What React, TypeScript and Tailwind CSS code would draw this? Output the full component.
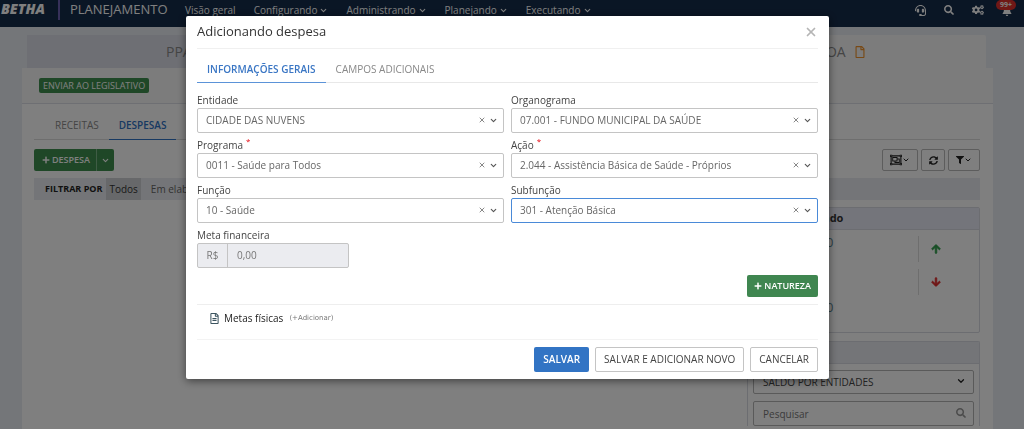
import React, { useState } from 'react';
import { ChevronDown, X } from 'lucide-react';
import {
  FaArrowDown,
  FaArrowUp,
  FaBell,
  FaCogs,
  FaFilter,
  FaHeadset,
  FaPlus,
  FaRegFile,
  FaRegFileAlt,
  FaRegObjectGroup,
  FaSearch,
  FaSyncAlt,
} from 'react-icons/fa';

const menus = ['Configurando', 'Administrando', 'Planejando', 'Executando'];

interface SelectFieldProps {
  id: string;
  label: string;
  value: string;
  required?: boolean;
  active?: boolean;
}

const SelectField: React.FC<SelectFieldProps> = ({ id, label, value, required, active }) => {
  const [selected, setSelected] = useState(value);

  return (
    <div>
      <label htmlFor={id} className="relative block h-5 w-fit pt-1.5 text-[10px] leading-3 text-[#444]">
        {label}
        {required && <span className="absolute top-0.5 left-full pl-[3px] text-[8px] leading-3 text-red-600">*</span>}
      </label>
      <div className="relative">
        <select
          id={id}
          value={selected}
          onChange={(e) => setSelected(e.target.value)}
          className={`block h-[25px] w-full appearance-none rounded-xs border bg-white pr-10 pl-2 text-[10px] text-[#666] outline-none ${
            active ? 'border-[#4a8ad8]' : 'border-[#c4c4c4]'
          }`}
        >
          <option value="" />
          <option value={value}>{value}</option>
        </select>
        <button
          type="button"
          aria-label={`Limpar ${label}`}
          onClick={() => setSelected('')}
          className="absolute top-2 right-[18px] text-[#888]"
        >
          <X className="size-2" strokeWidth={3} />
        </button>
        <ChevronDown className="pointer-events-none absolute top-2 right-1.5 size-[9px] text-[#555]" strokeWidth={3} />
      </div>
    </div>
  );
};

const TopBar: React.FC = () => (
  <header className="flex h-[27px] items-start bg-[#152c4a] text-white">
    <span className="w-[58px] pl-px text-[14px] leading-[18px] font-extrabold italic">BETHA</span>
    <span className="h-5 w-0.5 bg-[#6f62b5]" />
    <span className="w-[125px] pl-2.5 text-[13px] leading-[18px]">PLANEJAMENTO</span>
    <nav className="flex gap-[18px] text-[10px] leading-5">
      <a href="#">Visão geral</a>
      {menus.map((menu) => (
        <a key={menu} href="#" className="flex items-center gap-0.5">
          {menu}
          <ChevronDown className="size-[9px]" strokeWidth={3} />
        </a>
      ))}
    </nav>
    <div className="ml-auto flex h-5 items-center gap-[18px] pr-3">
      <button type="button" aria-label="Suporte"><FaHeadset className="size-[11px]" /></button>
      <button type="button" aria-label="Pesquisar"><FaSearch className="size-2.5" /></button>
      <button type="button" aria-label="Configurações"><FaCogs className="size-3" /></button>
      <button type="button" aria-label="Notificações" className="relative">
        <FaBell className="mt-0.5 size-2.5" />
        <span className="absolute -top-1 -left-1.5 rounded-full bg-[#e0302c] px-1 text-[7px] leading-[10px] font-bold">
          99+
        </span>
      </button>
    </div>
  </header>
);

const Page: React.FC = () => (
  <div className="h-full">
    <TopBar />
    <main className="mr-[31px] ml-[22px]">
      <div className="mr-[7px] ml-[5px] grid grid-cols-3 pt-2 text-[14px] text-[#8a8a8a]">
        <div className="flex h-[33px] items-center justify-center gap-2 bg-[#dddfe9] pl-1">
          PPA <FaRegFile className="size-3 text-[#f0932b]" />
        </div>
        <div className="flex h-[33px] items-center justify-center gap-2 bg-[#dddfe9]">
          LDO <FaRegFile className="size-3 text-[#f0932b]" />
        </div>
        <div className="flex h-[33px] items-center justify-center gap-2 rounded-t-xs bg-[#f8f8f8] pl-8">
          LOA <FaRegFile className="size-3 text-[#f0932b]" />
        </div>
      </div>
      <section className="bg-white">
        <div className="flex h-9 items-center border-b border-[#dcdfe6] bg-[#f8f8f8] px-[17px]">
          <button type="button" className="rounded-xs bg-[#3f8f4f] px-1 text-[9px] leading-[15px] font-medium text-white">
            ENVIAR AO LEGISLATIVO
          </button>
        </div>
        <div className="pr-[13px] pb-4 pl-3">
          <div className="flex h-9 items-end border-b border-[#ddd] pl-[11px] text-[10px] leading-[28px]">
            <button type="button" className="px-2.5 text-[#8a8a8a]">RECEITAS</button>
            <button type="button" className="-mb-px border-b border-[#2f72c4] px-2.5 font-semibold text-[#2f72c4]">
              DESPESAS
            </button>
          </div>
          <div className="mt-[9px] flex h-[22px] justify-between">
            <div className="flex text-[9px] font-semibold text-white">
              <button type="button" className="flex items-center gap-0.5 rounded-l-xs bg-[#3f8f4f] pr-1.5 pl-2">
                <FaPlus className="size-2" /> DESPESA
              </button>
              <button
                type="button"
                aria-label="Mais opções"
                className="rounded-r-xs border-l border-[#7fb88a] bg-[#3f8f4f] px-1"
              >
                <ChevronDown className="size-[9px]" strokeWidth={3} />
              </button>
            </div>
            <div className="flex gap-[3px] text-[#222]">
              <button
                type="button"
                aria-label="Agrupar"
                className="flex w-9 items-center justify-center rounded-xs border border-[#bbb]"
              >
                <FaRegObjectGroup className="size-3" />
                <ChevronDown className="size-2" strokeWidth={3} />
              </button>
              <button
                type="button"
                aria-label="Atualizar"
                className="flex w-6 items-center justify-center rounded-xs border border-[#bbb]"
              >
                <FaSyncAlt className="size-[9px]" />
              </button>
              <button
                type="button"
                aria-label="Filtrar"
                className="flex w-8 items-center justify-center rounded-xs border border-[#bbb]"
              >
                <FaFilter className="size-2" />
                <ChevronDown className="size-2" strokeWidth={3} />
              </button>
            </div>
          </div>
          <div className="mt-[7px] flex h-[22px] items-stretch bg-[#e9ebf0] pl-[11px] text-[10px] leading-[22px] text-[#666]">
            <span className="mr-1 text-[9px] font-bold text-[#222]">FILTRAR POR</span>
            <button type="button" className="bg-[#cfd1d5] px-[3px] text-[#333]">Todos</button>
            <button type="button" className="ml-2.5">Em elaboração</button>
          </div>
          <div className="mt-[7px] ml-auto flex w-[233px] flex-col gap-2">
            <div className="h-[126px] rounded-xs border border-[#d9dbe2]">
              <h3 className="h-[22px] border-b border-[#d9dbe2] bg-[#e9ebf6] pl-[41px] text-[11px] leading-5 font-bold text-[#333]">
                Planejado
              </h3>
              <div className="flex text-[13px] text-[#5f8790]">
                <div className="flex w-[170px] flex-col gap-12 pt-1 pl-[41px] leading-[17px]">
                  <span>R$ 0,00</span>
                  <span>R$ 0,00</span>
                </div>
                <div className="flex flex-col gap-[7px] pt-1.5">
                  <div className="flex h-[26px] items-center border-l border-[#ddd] pl-3">
                    <FaArrowUp className="size-2.5 text-[#2f9e4a]" strokeWidth={40} />
                  </div>
                  <div className="flex h-[26px] items-center border-l border-[#ddd] pl-3">
                    <FaArrowDown className="size-2.5 text-[#e02b2b]" strokeWidth={40} />
                  </div>
                </div>
              </div>
            </div>
            <div className="rounded-t-xs border border-b-0 border-[#d9dbe2]">
              <div className="h-[22px] border-b border-[#d9dbe2] bg-[#e9ebf0]" />
              <div className="flex flex-col gap-[7px] px-[5px] pt-1.5">
                <div className="relative">
                  <select
                    aria-label="Saldo"
                    className="block h-6 w-full appearance-none rounded-xs border border-[#b5b5b5] bg-white px-[9px] text-[10px] text-[#444]"
                  >
                    <option>SALDO POR ENTIDADES</option>
                  </select>
                  <ChevronDown className="pointer-events-none absolute top-1.5 right-2 size-2.5 text-[#222]" strokeWidth={3} />
                </div>
                <div className="relative">
                  <input
                    type="text"
                    aria-label="Pesquisar saldo"
                    placeholder="Pesquisar"
                    className="block h-[25px] w-full rounded-xs border border-[#b5b5b5] px-[9px] text-[10px] placeholder:text-[#777]"
                  />
                  <FaSearch className="absolute top-[7px] right-2 size-2.5 text-[#999]" />
                </div>
              </div>
            </div>
          </div>
        </div>
      </section>
    </main>
  </div>
);

const ExpenseModal: React.FC = () => (
  <div
    role="dialog"
    aria-modal="true"
    aria-labelledby="modal-title"
    className="w-full max-w-[643px] rounded-xs bg-white px-[11px] pb-[7px] shadow-[0_2px_8px_rgba(0,0,0,0.5)]"
  >
    <div className="flex h-[33px] items-center justify-between border-b border-[#f0f0f0]">
      <h2 id="modal-title" className="text-[13px] text-[#333]">Adicionando despesa</h2>
      <button type="button" aria-label="Fechar" className="text-[#b5b5b5]">
        <X className="size-3.5" strokeWidth={3} />
      </button>
    </div>

    <div role="tablist" className="flex h-[34px] items-end border-b border-[#e8e8e8] text-[10px] leading-[26px]">
      <button
        type="button"
        role="tab"
        aria-selected="true"
        className="-mb-px border-b border-[#5b93d8] px-2.5 font-semibold text-[#3a76c4]"
      >
        INFORMAÇÕES GERAIS
      </button>
      <button type="button" role="tab" aria-selected="false" className="px-2.5 text-[#888]">
        CAMPOS ADICIONAIS
      </button>
    </div>

    <form onSubmit={(e) => e.preventDefault()}>
      <div className="mt-[5px] grid grid-cols-2 gap-x-[7px]">
        <SelectField id="entidade" label="Entidade" value="CIDADE DAS NUVENS" />
        <SelectField id="organograma" label="Organograma" value="07.001 - FUNDO MUNICIPAL DA SAÚDE" />
        <SelectField id="programa" label="Programa" value="0011 - Saúde para Todos" required />
        <SelectField id="acao" label="Ação" value="2.044 - Assistência Básica de Saúde - Próprios" required />
        <SelectField id="funcao" label="Função" value="10 - Saúde" />
        <SelectField id="subfuncao" label="Subfunção" value="301 - Atenção Básica" active />
      </div>

      <label htmlFor="meta" className="block h-5 w-fit pt-1.5 text-[10px] leading-3 text-[#444]">
        Meta financeira
      </label>
      <div className="flex h-[25px] w-[152px] rounded-xs border border-[#c4c4c4] bg-[#ebecf0] text-[10px] text-[#777]">
        <span className="w-[30px] shrink-0 border-r border-[#c4c4c4] text-center leading-[22px]">R$</span>
        <input id="meta" type="text" defaultValue="0,00" disabled className="w-full min-w-0 px-[9px]" />
      </div>

      <div className="mt-[7px] flex justify-end border-b border-[#eee] pb-[7px]">
        <button
          type="button"
          className="flex h-[22px] items-center gap-0.5 rounded-xs bg-[#3f8650] px-[7px] text-[9px] font-semibold text-white"
        >
          <FaPlus className="size-2" /> NATUREZA
        </button>
      </div>

      <div className="flex h-[35px] items-center border-b border-[#f3f3f3] pb-[7px] pl-3">
        <FaRegFileAlt className="size-[11px] text-[#3d5560]" />
        <span className="ml-1 text-[10px] text-[#222]">Metas físicas</span>
        <button type="button" className="ml-1.5 font-['DejaVu_Sans'] text-[7px] text-[#777]">(+Adicionar)</button>
      </div>

      <div className="mt-[7px] flex justify-end gap-1.5 text-[10px] text-[#444]">
        <button type="submit" className="h-[25px] rounded-xs bg-[#3274c4] px-[9px] font-semibold text-white">SALVAR</button>
        <button type="button" className="h-[25px] rounded-xs border border-[#c4c4c4] px-2">SALVAR E ADICIONAR NOVO</button>
        <button type="button" className="h-[25px] rounded-xs border border-[#c4c4c4] px-2">CANCELAR</button>
      </div>
    </form>
  </div>
);

const App: React.FC = () => (
  <div className="h-screen overflow-hidden bg-[#e9edf2] font-['Open_Sans',sans-serif]">
    <Page />
    <div className="fixed inset-0 flex items-start justify-center bg-black/50 pt-4 pr-[9px]">
      <ExpenseModal />
    </div>
  </div>
);

export default App;
